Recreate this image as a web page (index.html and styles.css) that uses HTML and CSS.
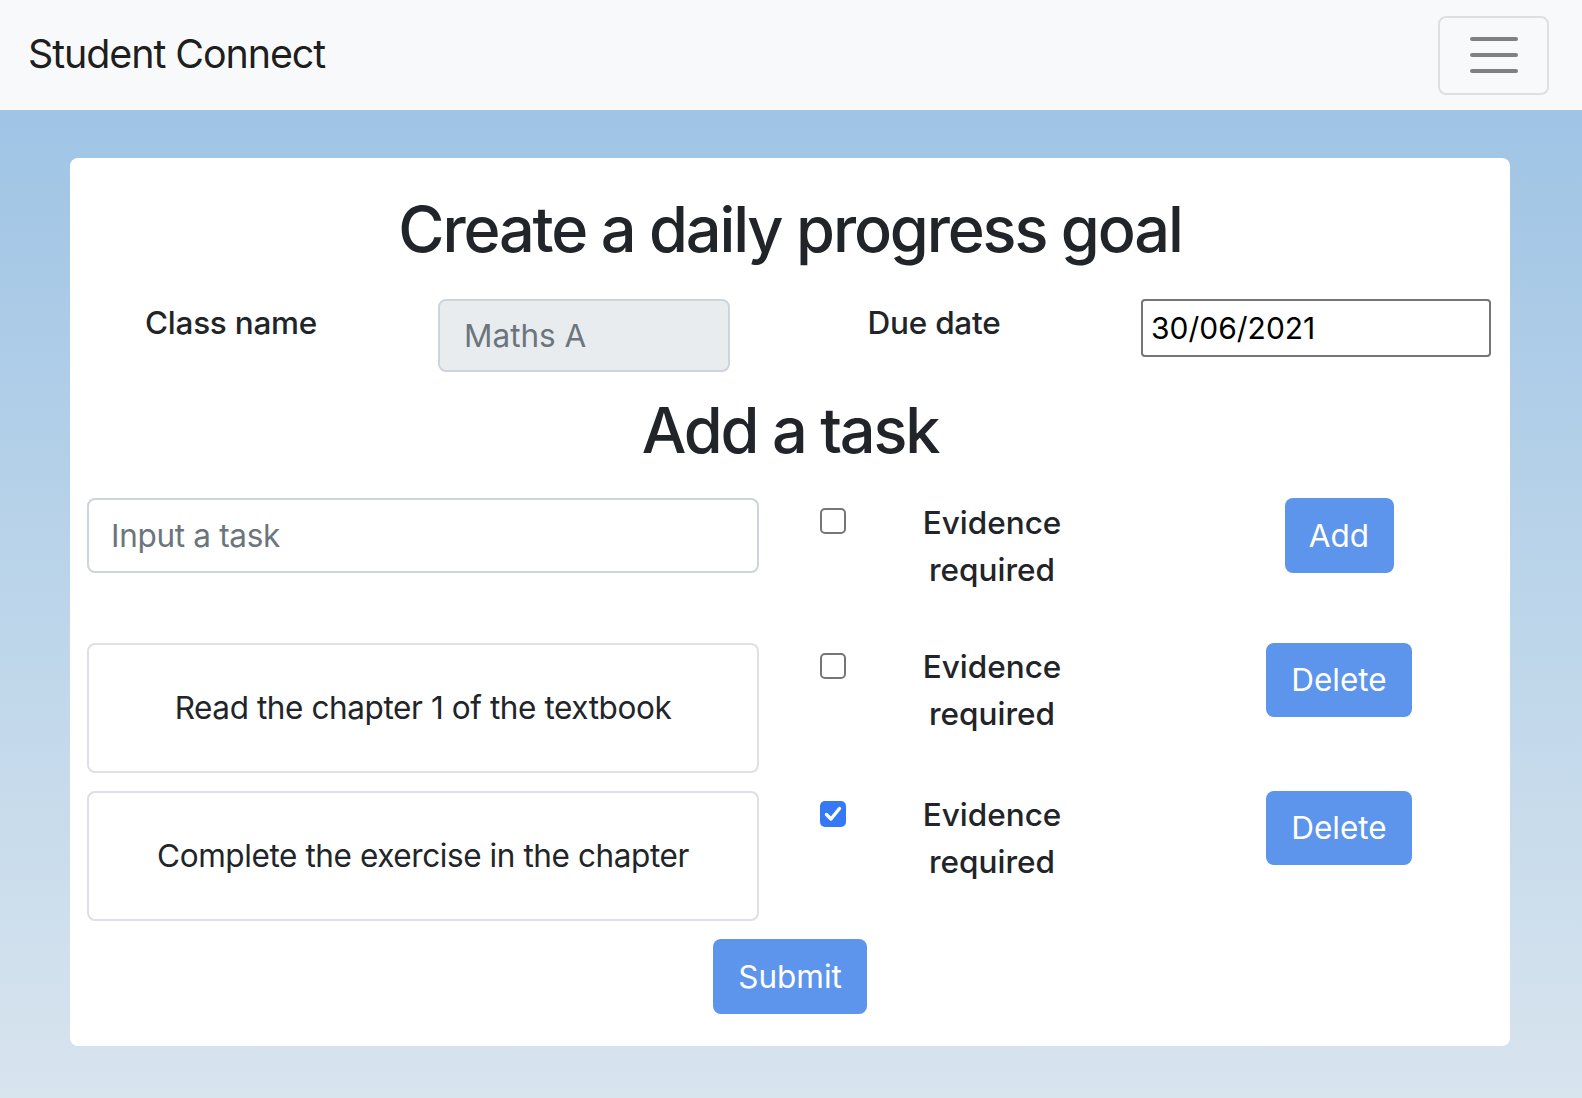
FILE: index.html
```html
<!DOCTYPE html>
<html lang="en">
<head>
<meta charset="utf-8">
<title>Student Connect</title>
<link rel="stylesheet" href="styles.css">
</head>
<body>
<nav class="navbar">
  <span class="brand">Student Connect</span>
  <button class="toggler" type="button" aria-label="Toggle navigation">
    <span class="bar"></span><span class="bar"></span><span class="bar"></span>
  </button>
</nav>
<main class="page">
  <section class="card">
    <h2 class="title">Create a daily progress goal</h2>
    <div class="meta-row">
      <div class="field">
        <label class="field-label">Class name</label>
        <div class="field-control"><input class="class-input" type="text" value="Maths A" disabled></div>
      </div>
      <div class="field">
        <label class="field-label">Due date</label>
        <div class="field-control"><input class="date-input" type="text" value="30/06/2021"></div>
      </div>
    </div>
    <h2 class="subtitle">Add a task</h2>

    <div class="task-row add-row">
      <div class="task-cell"><input class="task-input" type="text" placeholder="Input a task"></div>
      <div class="check-cell"><span class="check"></span></div>
      <div class="evidence">Evidence required</div>
      <div class="action-cell"><button class="btn btn-add" type="button">Add</button></div>
    </div>

    <div class="task-row item-row">
      <div class="task-cell"><div class="task-box">Read the chapter 1 of the textbook</div></div>
      <div class="check-cell"><span class="check"></span></div>
      <div class="evidence">Evidence required</div>
      <div class="action-cell"><button class="btn btn-delete" type="button">Delete</button></div>
    </div>

    <div class="task-row item-row">
      <div class="task-cell"><div class="task-box">Complete the exercise in the chapter</div></div>
      <div class="check-cell"><span class="check checked"><svg viewBox="0 0 26 26" width="26" height="26"><path d="M6.5 13.5 L11 18 L19.5 7.5" fill="none" stroke="#fff" stroke-width="3.4" stroke-linecap="round" stroke-linejoin="round"/></svg></span></div>
      <div class="evidence">Evidence required</div>
      <div class="action-cell"><button class="btn btn-delete" type="button">Delete</button></div>
    </div>

    <div class="submit-wrap"><button class="btn btn-submit" type="submit">Submit</button></div>
  </section>
</main>
</body>
</html>
```

FILE: styles.css
```css
* { box-sizing: border-box; }

body {
  margin: 0;
  font-family: Inter, "Noto Sans", sans-serif;
  font-size: 31.5px;
  line-height: 1.5;
  color: #212529;
  background: #d8e4ee;
}

.navbar {
  height: 110px;
  background: #f8f9fa;
  display: flex;
  align-items: center;
  justify-content: space-between;
  padding: 0 33px 0 28px;
}

.brand {
  font-size: 39.4px;
  line-height: 1.5;
  color: rgba(0, 0, 0, 0.9);
  letter-spacing: -0.027em;
}

.toggler {
  width: 111px;
  height: 79px;
  border: 2px solid rgba(0, 0, 0, 0.1);
  border-radius: 8px;
  background: transparent;
  display: flex;
  flex-direction: column;
  align-items: center;
  justify-content: center;
  gap: 12px;
  padding: 0;
}

.bar {
  display: block;
  width: 48px;
  height: 4px;
  border-radius: 2px;
  background: #7f8080;
}

.page {
  min-height: calc(100vh - 110px);
  background: linear-gradient(180deg, #9fc4e5 0%, #bcd5ea 50%, #d8e4ee 100%);
  padding: 48px 72px 53px 70px;
}

.card {
  background: #fff;
  border-radius: 8px;
  padding: 34px 17px 32px;
}

.title,
.subtitle {
  margin: 0;
  font-size: 63px;
  font-weight: 500;
  line-height: 1.2;
  text-align: center;
  letter-spacing: -0.034em;
}

.title { margin-bottom: 31px; }
.subtitle { margin: 21px 0 30px; }

.meta-row {
  display: grid;
  grid-template-columns: 1fr 1fr;
}

.field {
  display: grid;
  grid-template-columns: 351px 1fr;
  align-items: start;
}

.field-label {
  padding-right: 63px;
  text-align: center;
  font-weight: 500;
  letter-spacing: -0.008em;
}

.class-input {
  width: 292px;
  height: 73px;
  border: 2px solid #ced4da;
  border-radius: 8px;
  background: #e9ecef;
  color: #6c757d;
  padding: 0 24px;
  font: inherit;
  line-height: 1.5;
}

.date-input {
  width: 350px;
  height: 58px;
  border: 2px solid #767676;
  border-radius: 4px;
  background: #fff;
  color: #000;
  padding: 0 8px;
  font-family: Inter, "Noto Sans", sans-serif;
  font-size: 30px;
}

.task-row {
  display: grid;
  grid-template-columns: 703px 117px 170px 1fr;
  align-items: start;
}

.add-row { margin-bottom: 49px; }
.item-row { margin-bottom: 18px; }

.task-input {
  width: 672px;
  height: 75px;
  border: 2px solid #ced4da;
  border-radius: 8px;
  padding: 0 22px;
  font: inherit;
  color: #495057;
  letter-spacing: -0.01em;
}

.task-input::placeholder { color: #6c757d; }

.task-box {
  width: 672px;
  height: 130px;
  border: 2px solid #dde0e4;
  border-radius: 8px;
  display: flex;
  align-items: center;
  justify-content: center;
  text-align: center;
  letter-spacing: -0.013em;
}

.check-cell {
  padding: 10px 0 0 30px;
}

.check {
  display: block;
  width: 26px;
  height: 26px;
  border: 2px solid #767676;
  border-radius: 5px;
  background: #fff;
}

.check.checked {
  border: none;
  background: #3579f6;
}

.check svg { display: block; }

.evidence {
  text-align: center;
  font-weight: 500;
}

.add-row .evidence { padding-top: 1px; }

.action-cell {
  padding-left: 108px;
  display: flex;
  justify-content: center;
}

.btn {
  border: none;
  border-radius: 8px;
  background: #5c95eb;
  color: #fff;
  font: inherit;
  line-height: 1.5;
  padding: 0;
  display: flex;
  align-items: center;
  justify-content: center;
}

.btn-add { width: 109px; height: 75px; }
.btn-delete { width: 146px; height: 74px; }
.btn-submit { width: 154px; height: 75px; }

.submit-wrap {
  display: flex;
  justify-content: center;
}
```
